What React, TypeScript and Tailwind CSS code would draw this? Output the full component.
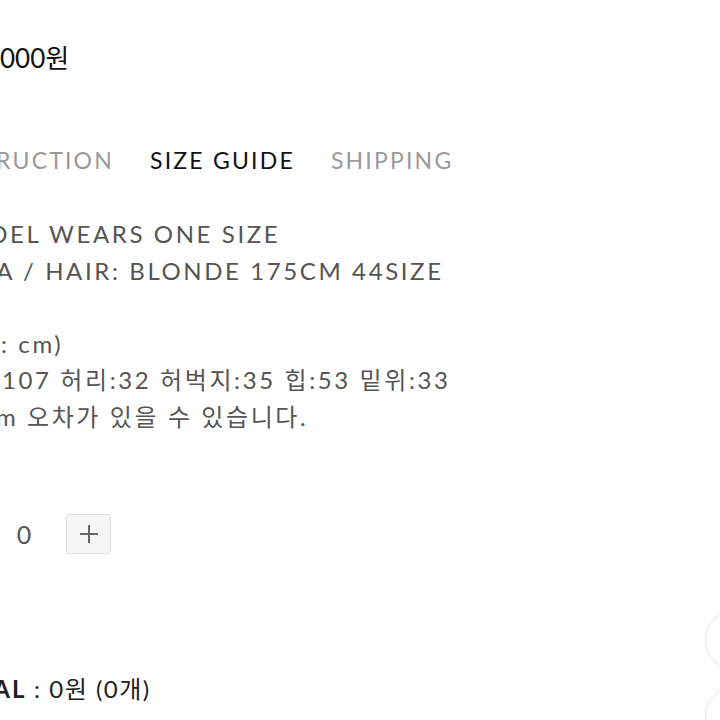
import React from 'react';

const font = "font-['Lato','Noto_Sans_CJK_KR',sans-serif]";

// the left edge of the page is cut off: the hidden part of each line sits in a
// right-anchored box so the visible part starts where the screenshot shows it
function Line({ pre, text, box }: { pre: string; text: string; box: string }) {
  return (
    <p className="flex whitespace-pre">
      <span className={`flex shrink-0 justify-end ${box}`}>{pre}</span>
      <span>{text}</span>
    </p>
  );
}

export default function App() {
  return (
    <div className={`relative h-[720px] w-[720px] overflow-hidden bg-white ${font}`}>
      <div className="pt-[40px]">
        <div className="text-[26px] leading-[36px] text-[#111]">
          <Line pre="49," text="000원" box="w-[0px]" />
        </div>

        <div className="mt-[66px] flex gap-[36px] text-[23px] leading-[36px] tracking-[2.2px]">
          <span className="flex w-[114px] shrink-0 justify-end whitespace-nowrap text-[#999]">INSTRUCTION</span>
          <span className="text-[#111]">SIZE GUIDE</span>
          <span className="text-[#999]">SHIPPING</span>
        </div>

        <div className="mt-[38px] text-[24px] leading-[36.6px] tracking-[2.6px] text-[#555]">
          <Line pre="MOD" text="EL WEARS ONE SIZE" box="w-[10px]" />
          <Line pre={"EYES: BROWN / HAIR: BLONDE A\u00a0"} text="/ HAIR: BLONDE 175CM 44SIZE" box="w-[23px]" />
          <p>&nbsp;</p>
          <Line pre="(단위" text=": cm)" box="w-[1px]" />
          <Line pre="총장:" text="107 허리:32 허벅지:35 힙:53 밑위:33" box="w-[2px]" />
          <Line pre={"1~2cm\u00a0"} text="오차가 있을 수 있습니다." box="w-[27px]" />
        </div>

        <div className="mt-[78px] flex items-center">
          <span className="mr-[18px] w-[48px] text-center text-[25px] leading-[40px] text-[#555]">0</span>
          <button className="flex h-[40px] w-[45px] items-center justify-center rounded-[3px] border border-[#dedede] bg-[#f6f6f6]">
            <svg width="20" height="20" viewBox="0 0 20 20" fill="none" stroke="#666" strokeWidth="2">
              <path d="M10 1v18M1 10h18" />
            </svg>
          </button>
        </div>

        <div className="mt-[117px] text-[24px] leading-[36px] text-[#222]">
          <p className="flex whitespace-pre">
            <span className="flex w-[12px] shrink-0 justify-end font-bold tracking-[2px]">TOTA</span>
            <span className="font-bold tracking-[2px]">L</span>
            <span className="tracking-[1.5px]">{" : 0원 (0개)"}</span>
          </p>
        </div>
      </div>

      <div className="absolute left-[705px] top-[610px] h-[60px] w-[60px] rounded-full border border-[#e6e6e6] bg-white" />
      <div className="absolute left-[705px] top-[686px] h-[60px] w-[60px] rounded-full border border-[#e6e6e6] bg-white" />
    </div>
  );
}
